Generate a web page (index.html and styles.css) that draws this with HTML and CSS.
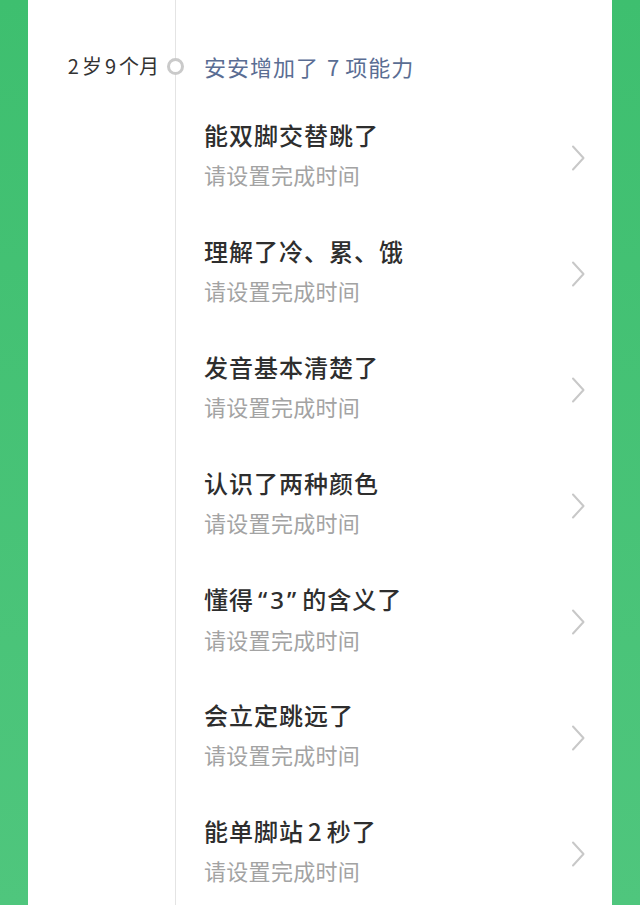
FILE: index.html
```html
<!DOCTYPE html>
<html lang="zh-CN">
<head>
<meta charset="utf-8">
<title>成长记录</title>
<link rel="stylesheet" href="styles.css">
</head>
<body>
<div class="page">
  <div class="card">
    <div class="row head">
      <div class="age">2<span class="sep"></span>岁<span class="sep"></span>9<span class="sep"></span>个月</div>
      <div class="rail-cell head-cell">
        <span class="dot"></span>
        <div class="group-title">安安增加了<span class="num">7</span>项能力</div>
      </div>
    </div>

    <div class="row">
      <div class="age"></div>
      <div class="rail-cell item">
        <div class="text"><div class="title">能双脚交替跳了</div><div class="sub">请设置完成时间</div></div>
        <svg class="chev" viewBox="0 0 14 26" width="14" height="26"><path d="M2 1.5 L12.5 13 L2 24.5"/></svg>
      </div>
    </div>
    <div class="row">
      <div class="age"></div>
      <div class="rail-cell item">
        <div class="text"><div class="title">理解了冷、累、饿</div><div class="sub">请设置完成时间</div></div>
        <svg class="chev" viewBox="0 0 14 26" width="14" height="26"><path d="M2 1.5 L12.5 13 L2 24.5"/></svg>
      </div>
    </div>
    <div class="row">
      <div class="age"></div>
      <div class="rail-cell item">
        <div class="text"><div class="title">发音基本清楚了</div><div class="sub">请设置完成时间</div></div>
        <svg class="chev" viewBox="0 0 14 26" width="14" height="26"><path d="M2 1.5 L12.5 13 L2 24.5"/></svg>
      </div>
    </div>
    <div class="row">
      <div class="age"></div>
      <div class="rail-cell item">
        <div class="text"><div class="title">认识了两种颜色</div><div class="sub">请设置完成时间</div></div>
        <svg class="chev" viewBox="0 0 14 26" width="14" height="26"><path d="M2 1.5 L12.5 13 L2 24.5"/></svg>
      </div>
    </div>
    <div class="row">
      <div class="age"></div>
      <div class="rail-cell item">
        <div class="text"><div class="title">懂得<span class="latin">“3”</span>的含义了</div><div class="sub">请设置完成时间</div></div>
        <svg class="chev" viewBox="0 0 14 26" width="14" height="26"><path d="M2 1.5 L12.5 13 L2 24.5"/></svg>
      </div>
    </div>
    <div class="row">
      <div class="age"></div>
      <div class="rail-cell item">
        <div class="text"><div class="title">会立定跳远了</div><div class="sub">请设置完成时间</div></div>
        <svg class="chev" viewBox="0 0 14 26" width="14" height="26"><path d="M2 1.5 L12.5 13 L2 24.5"/></svg>
      </div>
    </div>
    <div class="row">
      <div class="age"></div>
      <div class="rail-cell item">
        <div class="text"><div class="title">能单脚站<span class="num2">2</span>秒了</div><div class="sub">请设置完成时间</div></div>
        <svg class="chev" viewBox="0 0 14 26" width="14" height="26"><path d="M2 1.5 L12.5 13 L2 24.5"/></svg>
      </div>
    </div>
  </div>
</div>
</body>
</html>
```

FILE: styles.css
```css
html, body {
  margin: 0;
  padding: 0;
}
body {
  background: linear-gradient(180deg, #3ebf6f 0%, #4fc67d 100%);
  font-family: "Noto Sans CJK SC", "Noto Sans", sans-serif;
  height: 905px;
  overflow: hidden;
}
.page {
  padding: 0 28px;
  height: 905px;
}
.card {
  background: #fff;
  height: 905px;
  overflow: hidden;
}
.row {
  display: grid;
  grid-template-columns: 147px 1fr;
}
.rail-cell {
  border-left: 1px solid #e4e4e4;
  position: relative;
}
.age {
  font-size: 20px;
  color: #333;
  text-align: right;
  padding-right: 16px;
}
.head .age {
  padding-top: 51px;
  line-height: 30px;
}
.sep {
  display: inline-block;
  width: 3px;
}
.head-cell {
  padding: 51px 0 37px 28px;
}
.dot {
  position: absolute;
  left: -9px;
  top: 58px;
  width: 11px;
  height: 11px;
  border: 3px solid #cacaca;
  border-radius: 50%;
  background: #fff;
}
.group-title {
  font-size: 22px;
  line-height: 30px;
  color: #5a6d93;
  letter-spacing: 1px;
}
.num {
  margin: 0 5px 0 8px;
}
.item {
  display: flex;
  height: 116px;
  padding-left: 28px;
  box-sizing: border-box;
}
.text {
  flex: 1;
}
.title {
  font-size: 24px;
  line-height: 34px;
  color: #2e2e2e;
  font-weight: 500;
  letter-spacing: 1px;
}
.latin {
  font-family: "Noto Sans", "Noto Sans CJK SC", sans-serif;
  letter-spacing: 3px;
  padding: 0 3px 0 4px;
}
.num2 {
  margin: 0 4px;
}
.sub {
  font-size: 22px;
  line-height: 34px;
  margin-top: 5px;
  color: #a3a3a3;
  letter-spacing: 0.3px;
}
.chev {
  margin-top: 27px;
  margin-right: 27px;
  flex: none;
}
.chev path {
  fill: none;
  stroke: #c8c8c8;
  stroke-width: 2;
  stroke-linecap: round;
  stroke-linejoin: round;
}
```
